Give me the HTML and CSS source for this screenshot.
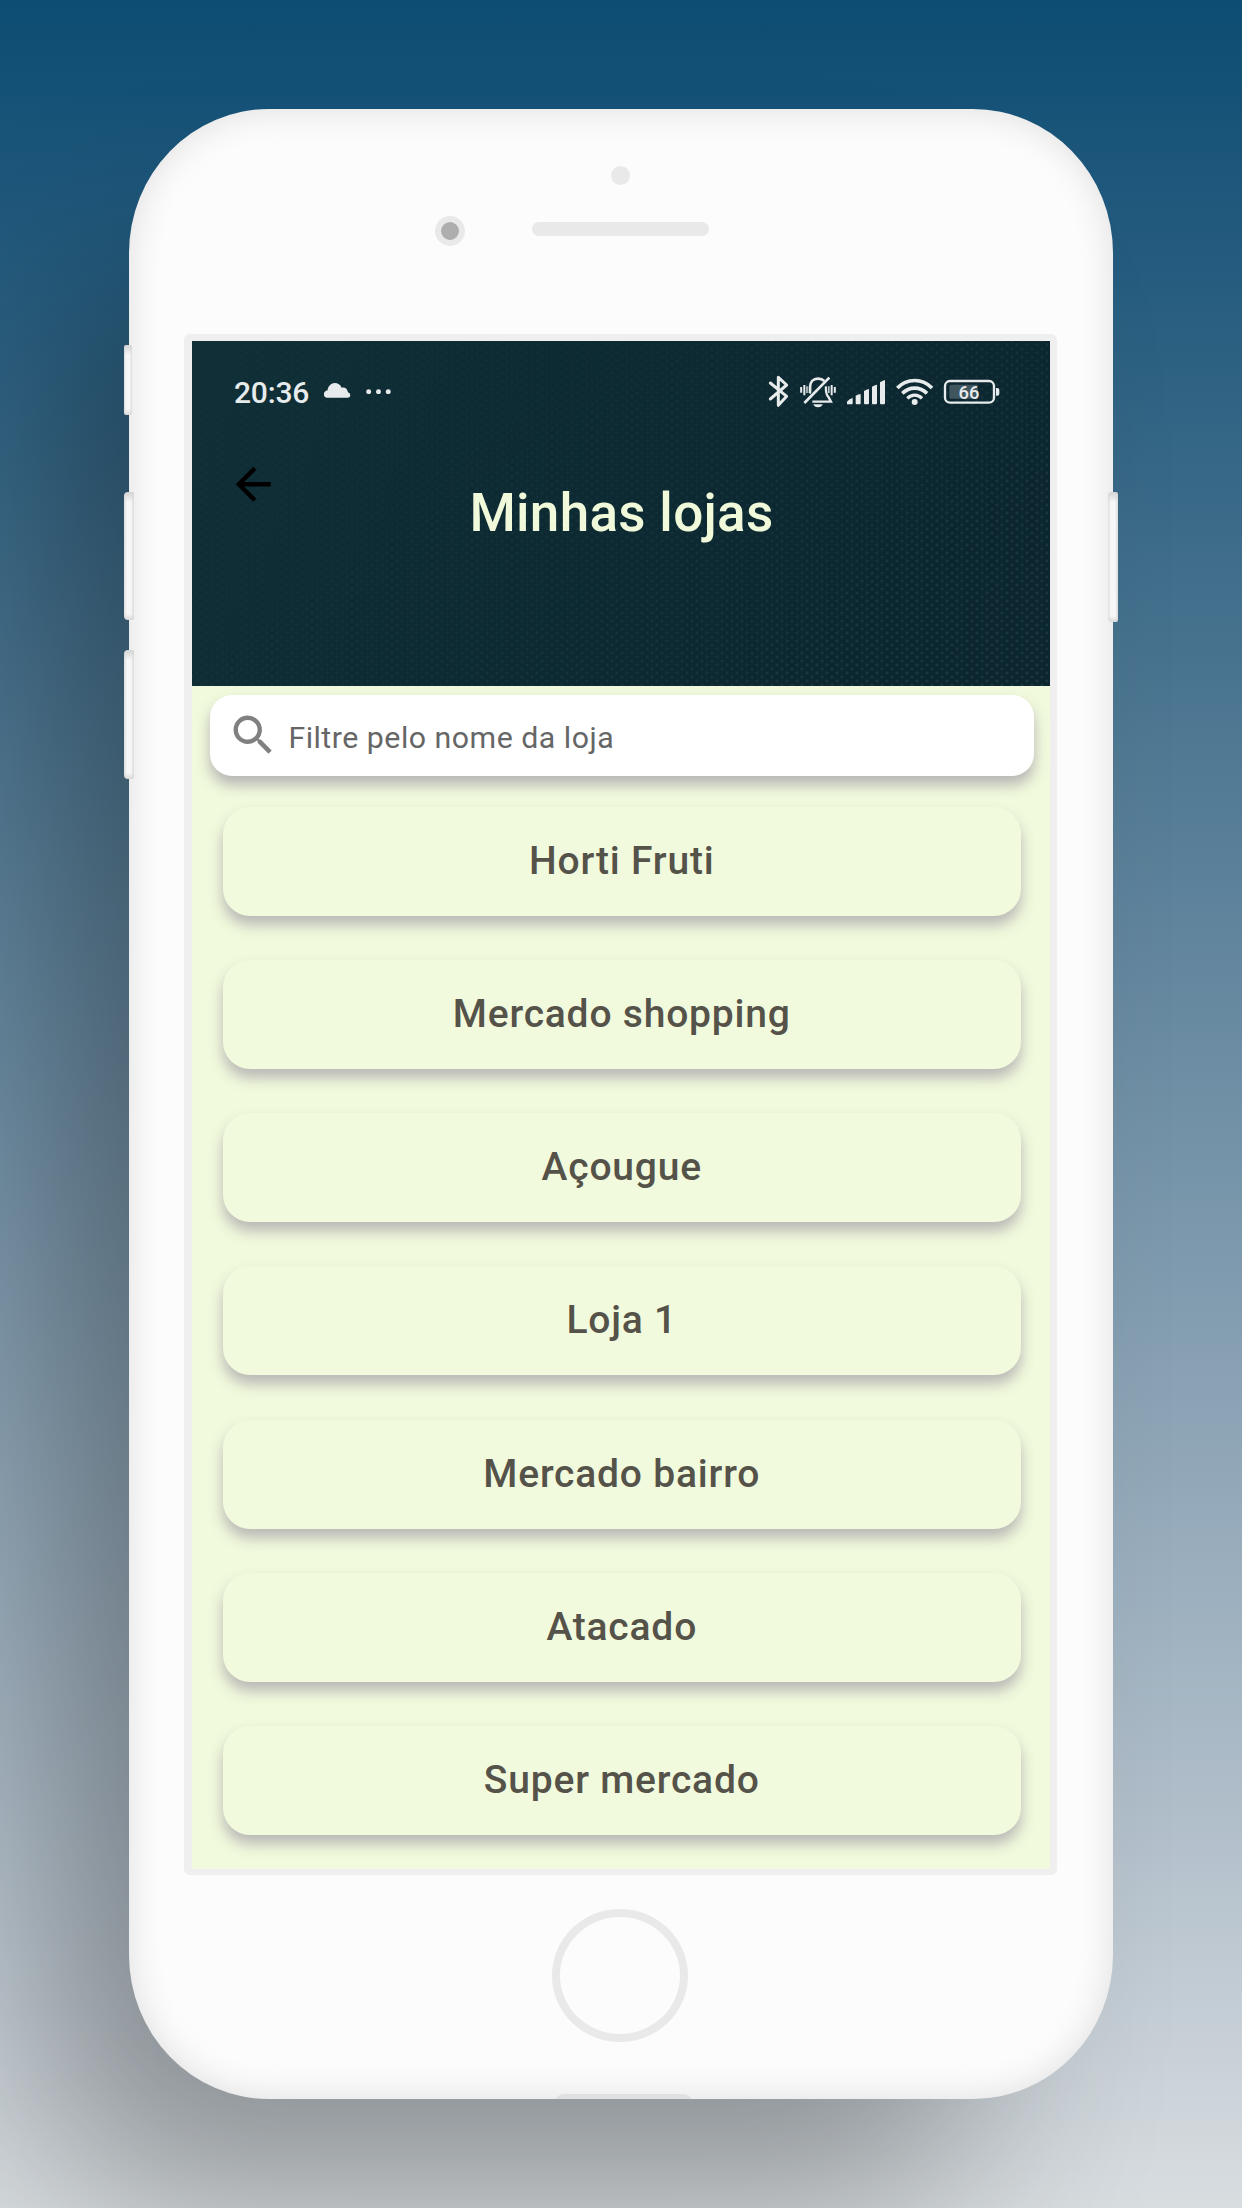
FILE: index.html
```html
<!DOCTYPE html>
<html lang="pt-BR">
<head>
<meta charset="utf-8">
<title>Minhas lojas</title>
<link rel="stylesheet" href="styles.css">
</head>
<body>
<div class="phone">
  <span class="side-key key-mute"></span>
  <span class="side-key key-up"></span>
  <span class="side-key key-down"></span>
  <span class="side-key key-power"></span>
  <div class="phone-top">
    <span class="sensor"></span>
    <span class="speaker"></span>
    <span class="camera"></span>
  </div>
  <div class="bezel">
    <main class="screen">
      <header class="header">
        <div class="status">
          <span class="time">20:36</span>
          <svg class="cloud" viewBox="433 160 79 44"><path d="M443 204a10 10 0 0 1-8-17q3-4 9-5c0-11 9-21 21-22q15 0 21 14c10-3 17 3 19 14q7 2 7 9t-7 7z" fill="#e7ebec"/></svg>
          <svg class="dots" viewBox="558 177 76 16" fill="#e7ebec"><circle cx="566" cy="185" r="7.5"/><circle cx="595.5" cy="185" r="7.5"/><circle cx="625" cy="185" r="7.5"/></svg>
          <div class="status-icons">
            <svg width="23.33" viewBox="80 75 70 100"><path d="M90 99l49 40-25 27V82l25 23-49 42" fill="none" stroke="#e7ebec" stroke-width="9" stroke-linejoin="round" stroke-linecap="round"/></svg>
            <svg width="38" viewBox="178 75 114 100"><g fill="none" stroke="#e7ebec"><path d="M184.500 111v17M194 105v31M276 105v31M285.500 111v17" stroke-width="6"/><path d="M202 109v20M267.500 109v20" stroke-width="4"/><path d="M210 130c2-4 1-11 1-18 0-16 10-26 24-26 9 0 15 3 19 7" stroke-width="8"/><path d="M259 109c-1 14 0 25 8 33l7 13h-56" stroke-width="7"/><path d="M269 83L194 159" stroke-width="8"/></g><path d="M221 163h28q-3 9-14 9t-14-9z" fill="#e7ebec"/></svg>
            <svg width="40" viewBox="318 75 120 100" fill="#e7ebec"><path d="M321 163v-8q7-9 17-11v16q0 3-3 3zM347 137q8-4 15-5v28q0 3-3 3h-9q-3 0-3-3zM372 123q7-5 15-6v43q0 3-3 3h-9q-3 0-3-3zM396 110q7-5 15-6v56q0 3-3 3h-9q-3 0-3-3zM420 97q7-5 15-7v70q0 3-3 3h-9q-3 0-3-3z"/></svg>
            <svg width="39.33" viewBox="462 75 118 100"><g fill="none" stroke="#e7ebec" stroke-width="11"><path d="M469 114c29-30 75-30 104 0"/><path d="M484 130c21-21 53-21 74 0"/><path d="M499 145c13-13 31-13 44 0" stroke-width="10"/></g><circle cx="521" cy="156" r="9" fill="#e7ebec"/></svg>
            <svg width="57.33" viewBox="608 75 172 100"><rect x="627" y="104" width="86" height="42" rx="5" fill="#40565e"/><rect x="614" y="93" width="147" height="65" rx="15" fill="none" stroke="#e7ebec" stroke-width="7"/><path d="M767 114h4q6 0 6 6v11q0 6-6 6h-4z" fill="#e7ebec"/><text x="686" y="146" text-anchor="middle" class="battery-text">66</text></svg>
          </div>
        </div>
        <div class="title-bar">
          <svg class="back" viewBox="0 0 24 24"><path d="M20 11H7.830l5.590-5.590L12 4l-8 8 8 8 1.410-1.410L7.830 13H20z"/></svg>
          <h1 class="title">Minhas lojas</h1>
        </div>
      </header>
      <div class="content">
        <div class="search">
          <svg class="search-icon" viewBox="0 0 24 24"><path fill="#808080" d="M15.500 14h-.79l-.28-.27A6.471 6.471 0 0 0 16 9.500 6.500 6.500 0 1 0 9.500 16c1.610 0 3.090-.59 4.230-1.570l.27.28v.79l5 4.990L20.490 19zm-6 0C7.010 14 5 11.990 5 9.500S7.010 5 9.500 5 14 7.010 14 9.500 11.990 14 9.500 14z"/></svg>
          <span class="placeholder">Filtre pelo nome da loja</span>
        </div>
        <ul class="stores">
          <li class="store">Horti Fruti</li>
          <li class="store">Mercado shopping</li>
          <li class="store">Açougue</li>
          <li class="store">Loja 1</li>
          <li class="store">Mercado bairro</li>
          <li class="store">Atacado</li>
          <li class="store">Super mercado</li>
        </ul>
      </div>
    </main>
  </div>
  <div class="home-button"></div>
  <div class="port"></div>
</div>
</body>
</html>
```
FILE: styles.css
```css
* { box-sizing: border-box; }
body {
  margin: 0;
  width: 1242px;
  height: 2208px;
  overflow: hidden;
  padding: 109px 0 0 129px;
  background: linear-gradient(#0d4c73, #48738f 30%, #afbdc9 81.500%, #d8dde0);
  font-family: Roboto, "Liberation Sans", sans-serif;
}
.phone {
  position: relative;
  width: 984px;
  height: 1990px;
  padding: 0 56px 0 55px;
  border-radius: 140px / 144px;
  background: #fcfcfc;
  box-shadow: -110px 135px 190px -30px rgba(0, 0, 0, .31), inset 0 0 36px rgba(0, 0, 0, .12);
  display: flex;
  flex-direction: column;
  align-items: center;
}
.side-key {
  position: absolute;
  left: -5px;
  width: 10px;
  border-radius: 4px 2px 2px 4px;
  background: linear-gradient(#d4d4d4, rgba(230, 230, 230, 0) 10px calc(100% - 6px), #d8d8d8), linear-gradient(90deg, #dedede, #f7f7f7 30% 70%, #dadada);
}
.key-mute { top: 236px; width: 8px; height: 70px; border-radius: 2px; }
.key-up { top: 383px; height: 128px; }
.key-down { top: 541px; height: 129px; }
.key-power { top: 383px; left: auto; right: -5px; height: 130px; }
.phone-top {
  height: 225px;
  width: 100%;
  padding: 57px 0 0 251px;
  display: grid;
  grid-template-columns: 30px 177px;
  grid-template-rows: 19px 25px 30px;
  column-gap: 67px;
  justify-content: start;
}
.sensor {
  grid-column: 2;
  justify-self: center;
  width: 19px;
  height: 19px;
  border-radius: 50%;
  background: #e9e9e9;
}
.speaker {
  grid-column: 2;
  grid-row: 3;
  width: 177px;
  height: 14px;
  margin-top: 12px;
  border-radius: 7px;
  background: #e9e9e9;
}
.camera {
  grid-column: 1;
  grid-row: 3;
  width: 30px;
  height: 30px;
  margin-top: 6px;
  border: 6px solid #e9e9e9;
  border-radius: 50%;
  background: #aeaeae;
}
.bezel {
  width: 873px;
  height: 1541px;
  padding: 7px 7px 6px 8px;
  border-radius: 6px;
  background: #efefef;
}
.screen {
  height: 1528px;
  overflow: hidden;
  background: #f1fadc;
}
.header {
  position: relative;
  height: 345px;
  padding-top: 34px;
  background: linear-gradient(115deg, #102f36, #0d2932 50%, #0c252e);
}
.header::before {
  content: "";
  position: absolute;
  inset: 0;
  background:
    radial-gradient(circle, #1d3f47 1px, transparent 2px) 0 0 / 10px 8px,
    radial-gradient(circle, #1d3f47 1px, transparent 2px) 5px 4px / 10px 8px;
  mask-image: linear-gradient(145deg, rgba(0, 0, 0, .2) 30%, rgba(0, 0, 0, .75));
}
.status {
  position: relative;
  height: 34px;
  padding: 0 50px 0 42px;
  display: flex;
}
.time {
  width: 90.300px;
  color: #e7ebec;
  font-size: 30px;
  line-height: 36px;
  font-weight: 500;
  letter-spacing: -.2px;
}
.cloud { width: 26.300px; height: 14.700px; margin-top: 8.300px; }
.dots { width: 25.300px; height: 5.300px; margin: 14px 0 0 15.500px; }
.status-icons {
  width: 233.300px;
  height: 33.300px;
  margin-left: auto;
  display: flex;
  justify-content: space-between;
}
.status-icons svg { height: 33.330px; }
.battery-text { font-size: 55px; font-weight: 500; fill: #e7ebec; }
.title-bar {
  position: relative;
  padding: 49px 35px 0;
  display: grid;
  grid-template-columns: 52.500px 1fr 52.500px;
}
.back { width: 52.500px; height: 52.500px; }
.title {
  margin: 22.500px 0 0 1px;
  color: #f0f9da;
  font-size: 53px;
  line-height: 64px;
  font-weight: 500;
  letter-spacing: .3px;
  text-align: center;
}
.content { padding: 9px 16px 0 17.500px; }
.search {
  height: 81px;
  padding: 0 17px;
  display: flex;
  border-radius: 22px;
  background: #fff;
  box-shadow: 0 9px 14px rgba(80, 60, 110, .36);
}
.search-icon { width: 52.400px; height: 52.400px; margin-top: 14px; }
.placeholder {
  margin-left: 9.500px;
  color: #666;
  font-size: 30.300px;
  line-height: 86px;
  letter-spacing: .5px;
}
.stores {
  list-style: none;
  margin: 31px 13px 0;
  padding: 0;
  display: grid;
  gap: 44.170px;
}
.store {
  height: 109px;
  border-radius: 27px;
  background: #f1fadc;
  box-shadow: 0 9px 14px rgba(80, 60, 110, .34);
  color: #55524a;
  font-size: 39px;
  font-weight: 500;
  line-height: 109px;
  letter-spacing: .8px;
  text-align: center;
}
.home-button {
  width: 136px;
  height: 133px;
  margin: 34px 1px 0 0;
  border: 8px solid #e9e9e9;
  border-radius: 50%;
}
.port {
  width: 135px;
  height: 5px;
  margin: auto 0 0 5px;
  border-radius: 10px 10px 0 0 / 5px 5px 0 0;
  background: #e0e0e0;
}
```
